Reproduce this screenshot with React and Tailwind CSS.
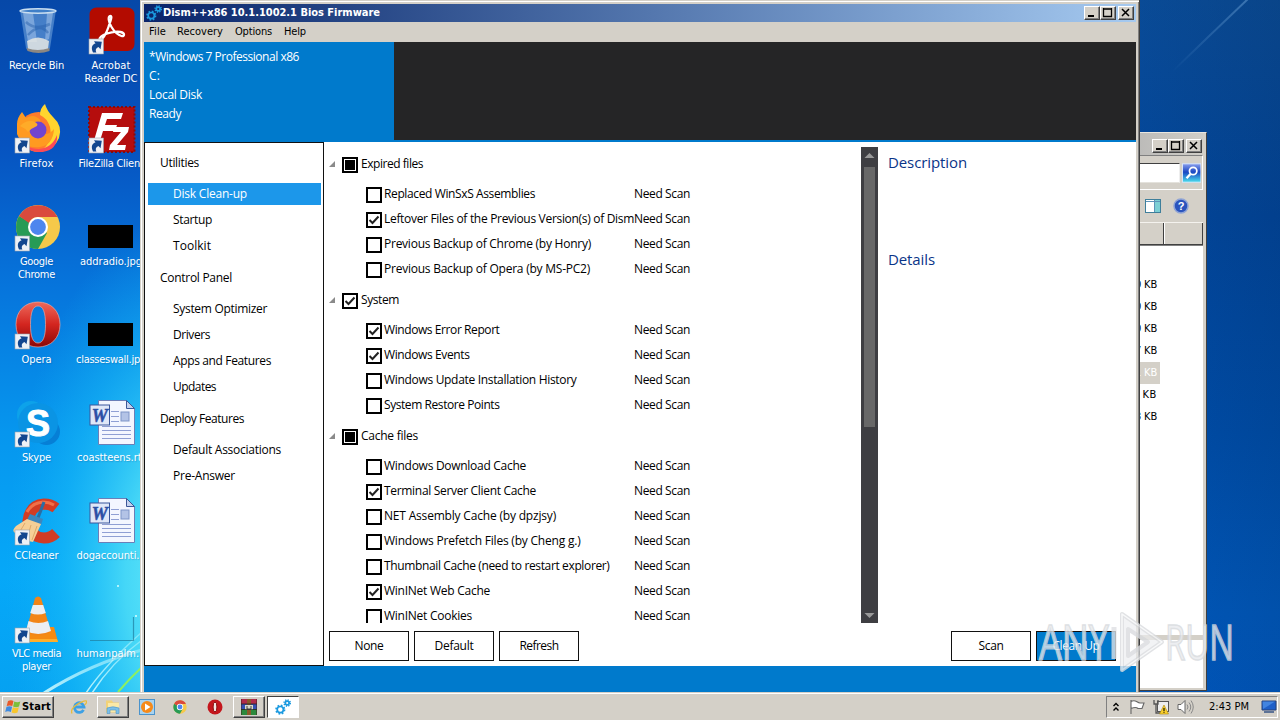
import React, { useLayoutEffect, useRef, useState } from 'react';

const UI = "font-['Open_Sans','Noto_Sans',sans-serif]";
const SYS = "font-['DejaVu_Sans_Condensed','DejaVu_Sans',sans-serif]";

/* Single-line text whose tracking is adjusted to fill a given width. */
function Fit({ w, children, className = '' }) {
  const ref = useRef(null);
  const [sp, setSp] = useState(0);
  useLayoutEffect(() => {
    if (!w) return;
    const natural = ref.current.getBoundingClientRect().width;
    setSp((w - natural) / String(children).length);
  }, []);
  return (
    <span ref={ref} className={'inline-block whitespace-pre ' + className} style={{ letterSpacing: sp ? sp + 'px' : undefined }}>
      {children}
    </span>
  );
}

function Gear({ cx, cy, r, c = '#1b9ae0' }) {
  const t = (2 * Math.PI * (r + 1)) / 16;
  return (
    <g fill="none" stroke={c}>
      <circle cx={cx} cy={cy} r={r} strokeWidth="1.7" />
      <circle cx={cx} cy={cy} r={r + 1} strokeWidth="2" strokeDasharray={`${t} ${t}`} />
    </g>
  );
}

function Gears({ className }) {
  return (
    <svg viewBox="0 0 16 16" className={className}>
      <Gear cx={5.3} cy={10.6} r={3.1} />
      <Gear cx={12.2} cy={4} r={1.9} />
    </svg>
  );
}

function Shortcut() {
  return (
    <g transform="translate(2 34)">
      <rect width="14.5" height="15" fill="#eef1f6" stroke="#9aa3b0" strokeWidth=".6" />
      <path d="M4 13.500C1.500 8.500 3.500 5.200 6.500 4.600L5 2.200l7.800.6-1.300 7.400-2-2.200C7.300 9 6 10.500 7.400 13.500z" fill="#12468f" />
    </g>
  );
}

const icons = {
  bin: (
    <g>
      <path d="M7 4 13 42q1 4 12 4t12-4L43 4z" fill="#83b4e4" fillOpacity=".5" />
      <path d="M10 7 15 36h9L20 7zM34 7l-2 28 4-2 4-26z" fill="#dcefff" opacity=".35" />
      <path d="M13 16q9 9 24 2M15 29q12-13 20-2" stroke="#245ea8" strokeWidth="2.500" fill="none" opacity=".45" />
      <path d="M14 35q11-7 22 0l-1 8q-10 3-20 0z" fill="#e6e7e4" opacity=".85" />
      <path d="M13.500 42q11 4 23 0v3q-11 4-22 0z" fill="#8d8781" />
      <ellipse cx="25" cy="5" rx="18" ry="2.200" fill="#3f7fc8" stroke="#c9def0" strokeWidth="1.400" />
    </g>
  ),
  acrobat: (
    <g>
      <rect x="2.500" y="1.500" width="45" height="43.500" rx="7" fill="#b30b00" />
      <path d="M23.500 10c-3 0-2 6 1 11s7 8 10 9 4-3-1-4-13 1-17 3-5 5-3 5 6-7 8-13 4-11 2-11z" fill="none" stroke="#fff" strokeWidth="2.300" />
      <g transform="translate(0 -1)"><Shortcut /></g>
    </g>
  ),
  firefox: (
    <g>
      <circle cx="25.500" cy="28" r="20" fill="#ff7b2c" />
      <path d="M27 11Q27 4 32 0q2 7 8 13 10 9 6 21-5 12-18 13 12-9 9-24-3-9-10-12z" fill="#ffd52e" />
      <path d="M4 20Q4 14 9 8l4 6q7-4 12 0 5 3 0 6-8 4 1 10 10 2 15-5-1 16-14 18Q10 45 4 30z" fill="#ff9a20" />
      <path d="M6 32q6 13 20 13 13-1 18-14 1 15-15 17Q12 49 6 32z" fill="#fb4a58" />
      <circle cx="25" cy="26" r="8.500" fill="#7244cf" />
      <path d="M7 22q7-7 15-4 5 3 0 5-5 2-7 5-3-4-8-6z" fill="#ffab28" />
      <Shortcut />
    </g>
  ),
  filezilla: (
    <g>
      <rect x="2" y="3" width="45.500" height="45" fill="#b50d0d" stroke="#8a0a0a" strokeWidth="2" strokeDasharray="2 2" />
      <path d="M15 9h21l-2 6H20l-2 6h12l-2 6H16l-4 13H6z" fill="#fff" />
      <path d="M27 23h15l-1 5-11 13h9l-1 5H22l1-5 11-13h-8z" fill="#fff" />
      <Shortcut />
    </g>
  ),
  chrome: (
    <g>
      <circle cx="25" cy="25" r="22" fill="#f6c94a" />
      <path d="M25 25 6 14a22 22 0 0 0 19 33l9-16z" fill="#279b56" />
      <path d="M6 14A22 22 0 0 1 44.500 15H25a10 10 0 0 0-9 6z" fill="#da4a3d" />
      <circle cx="25" cy="25" r="10" fill="#fff" />
      <circle cx="25" cy="25" r="7.900" fill="#4d86ee" />
      <Shortcut />
    </g>
  ),
  black: <rect x="1" y="23" width="45" height="23" fill="#000" />,
  opera: (
    <g>
      <defs>
        <linearGradient id="op" x1="0" y1="0" x2="0" y2="1">
          <stop offset="0" stopColor="#ee6a5c" />
          <stop offset=".5" stopColor="#d3251f" />
          <stop offset="1" stopColor="#8b0707" />
        </linearGradient>
      </defs>
      <path fillRule="evenodd" d="M25 2C38 2 47 11 47 24.500S38 47 25 47 3 38 3 24.500 12 2 25 2zm0 4c-5 0-7.500 6-7.500 18.500S20 43 25 43s7.500-6 7.500-18.500S30 6 25 6z" fill="url(#op)" stroke="#e9a8a2" strokeWidth=".7" />
      <Shortcut />
    </g>
  ),
  skype: (
    <g>
      <circle cx="18" cy="17" r="14" fill="#0da2ea" />
      <circle cx="33.500" cy="33.500" r="13.500" fill="#067fd6" />
      <circle cx="25" cy="25" r="20" fill="#0a94e4" />
      <text x="25" y="38" textAnchor="middle" fontFamily="Liberation Sans, sans-serif" fontWeight="bold" fontSize="36" fill="#fff" stroke="#fff">S</text>
      <Shortcut />
    </g>
  ),
  word: (
    <g>
      <path d="M11.500 2.500h28l8 8v36h-36z" fill="#f3f6ff" stroke="#6a7fb8" />
      <path d="M39.500 2.500v8h8z" fill="#c4d2ee" stroke="#3d5797" />
      <path d="M24 13.500h8M24 18.500h8M24 23.500h8M15 28.500h29M15 32.500h29M15 36.500h29M15 40.500h29" stroke="#8f9fd4" />
      <rect x="34" y="14" width="8" height="9" fill="#b3c3e6" stroke="#7f95c8" />
      <rect x="3" y="7" width="19.500" height="20" fill="#dfe7f8" stroke="#3a569c" />
      <text x="12.700" y="23.500" textAnchor="middle" fontFamily="Liberation Serif, serif" fontStyle="italic" fontWeight="bold" fontSize="18" fill="#2c4fa5" stroke="#2c4fa5" strokeWidth=".5">W</text>
    </g>
  ),
  ccleaner: (
    <g>
      <path d="M43 12Q38 8 31 8 17 9 15 25q1 16 16 17 7 0 12-5" fill="none" stroke="#d23c24" strokeWidth="11" />
      <path d="M41 9Q36 6 30 6 19 7 14 16" fill="none" stroke="#f07048" strokeWidth="3" />
      <path d="m31 6-6 16" stroke="#2b6da3" strokeWidth="3" />
      <path d="m17 18 13 5-2 6-14-5z" fill="#3d86bd" />
      <path d="M14 23 3 30q-4 4-2 6 7 8 19 10l8-18z" fill="#f6cf96" />
      <path d="m12 27-6 10m12-8-4 14m10-13-5 14" stroke="#dfa868" />
      <Shortcut />
    </g>
  ),
  vlc: (
    <g>
      <path d="m14 33-4 15h35l-4-15z" fill="#f58a12" />
      <path d="M11 45h33l1 3H10z" fill="#ffae2c" />
      <path d="M22 4q3-3 6 0l10 34q-13 7-25 0z" fill="#f28518" />
      <path d="M19.800 11h10.400l2.600 8q-8 3-15.600 0zM15.500 27q10 4 19.500 0l3 10q-13 6-25 0z" fill="#eceef2" />
      <Shortcut />
    </g>
  ),
  palm: <path d="M3 46.500h43.500V23" fill="none" stroke="#1f7d9e" strokeWidth="1.200" opacity=".7" />,
};

const columns = [
  [
    ['bin', [['Recycle Bin', 55]]],
    ['firefox', [['Firefox', 34]]],
    ['chrome', [['Google', 33], ['Chrome', 37]]],
    ['opera', [['Opera', 30]]],
    ['skype', [['Skype', 29]]],
    ['ccleaner', [['CCleaner', 44]]],
    ['vlc', [['VLC media', 49], ['player', 29]]],
  ],
  [
    ['acrobat', [['Acrobat', 39], ['Reader DC', 53]]],
    ['filezilla', [['FileZilla Client', 65]]],
    ['black', [['addradio.jpg', 62]]],
    ['black', [['classeswall.jpg', 70]]],
    ['word', [['coastteens.rtf', 68]]],
    ['word', [['dogaccounti...', 69]]],
    ['palm', [['humanpalm...', 69]]],
  ],
];

function Desktop() {
  return (
    <div className={'absolute left-0 top-0 flex pt-[6px] text-[11px] leading-[13px] text-white ' + SYS}>
      {columns.map((col, i) => (
        <div key={i} className="w-[74.500px]">
          {col.map(([ic, lines], j) => (
            <div key={j} className="flex h-[98px] w-[73px] flex-col items-center">
              <svg viewBox="0 0 48 48" className="mb-[5px] h-12 w-12 shrink-0 overflow-visible">{icons[ic]}</svg>
              {lines.map(([t, w]) => <Fit key={t} w={w} className="shrink-0 [text-shadow:1px_1px_1px_#0a3f7c40]">{t}</Fit>)}
            </div>
          ))}
        </div>
      ))}
    </div>
  );
}

function Wallpaper() {
  return (
    <svg viewBox="0 0 1280 720" className="absolute inset-0 h-full w-full">
      <defs>
        <linearGradient id="l1" x1="0" y1="0" x2="0" y2="1">
          <stop offset="0" stopColor="#0648a8" />
          <stop offset=".2" stopColor="#0653c0" />
          <stop offset=".4" stopColor="#0675dc" />
          <stop offset=".6" stopColor="#0696ee" />
          <stop offset=".8" stopColor="#06a8f8" />
          <stop offset="1" stopColor="#05a0f0" />
        </linearGradient>
        <radialGradient id="l2" gradientUnits="userSpaceOnUse" cx="0" cy="0" r="1" gradientTransform="translate(190 580) scale(185 370)">
          <stop offset="0" stopColor="#6ff0fb" />
          <stop offset=".35" stopColor="#4cdcf7" stopOpacity=".9" />
          <stop offset=".7" stopColor="#1cc0f8" stopOpacity=".45" />
          <stop offset="1" stopColor="#10b0f4" stopOpacity="0" />
        </radialGradient>
        <linearGradient id="r1" x1="0" y1="0" x2="0" y2="1">
          <stop offset="0" stopColor="#0b478c" />
          <stop offset=".3" stopColor="#024191" />
          <stop offset=".6" stopColor="#0049a0" />
          <stop offset=".85" stopColor="#0155b4" />
          <stop offset="1" stopColor="#0054b8" />
        </linearGradient>
        <linearGradient id="r2" x1="0" y1="0" x2="1" y2="0">
          <stop offset="0" stopColor="#0060d0" stopOpacity=".15" />
          <stop offset="1" stopColor="#003878" stopOpacity=".15" />
        </linearGradient>
        <linearGradient id="sw" x1="0" y1="1" x2="1" y2="0">
          <stop offset="0" stopColor="#d8ffff" stopOpacity=".85" />
          <stop offset="1" stopColor="#d8ffff" stopOpacity=".35" />
        </linearGradient>
        <linearGradient id="ray" x1="0" y1="1" x2="1" y2="0">
          <stop offset="0" stopColor="#6fa5d8" stopOpacity="0" />
          <stop offset="1" stopColor="#6fa5d8" stopOpacity=".5" />
        </linearGradient>
      </defs>
      <rect width="640" height="720" fill="url(#l1)" />
      <rect width="640" height="720" fill="url(#l2)" />
      <rect x="640" width="640" height="720" fill="url(#r1)" />
      <rect x="1140" width="140" height="720" fill="url(#r2)" />
      <path d="M1172 72Q1210 35 1250-3" stroke="url(#ray)" strokeWidth="2" fill="none" />
      <g fill="none">
        <path d="M44 693Q90 664 142 650" stroke="url(#sw)" strokeWidth="3" />
        <path d="M86 693Q105 665 142 632M92 693Q112 662 142 640" stroke="url(#sw)" strokeWidth="1.400" />
        <path d="M118 692Q130 678 142 667" stroke="#8df060" strokeWidth="2" />
      </g>
      <circle cx="118" cy="586" r="1" fill="#d8ffff" />
      <circle cx="136" cy="616" r="1" fill="#d8ffff" />
    </svg>
  );
}

const raised = 'border border-t-white border-l-white border-r-[#404040] border-b-[#404040] bg-[#d4d0c8] shadow-[inset_-1px_-1px_0_#808080]';

function CaptionButtons() {
  return (
    <div className="flex">
      <div className={'h-[14px] w-4 ' + raised}><svg viewBox="0 0 14 12" className="h-3 w-3.5"><path d="M3 9h6" stroke="#000" strokeWidth="2" /></svg></div>
      <div className={'h-[14px] w-4 ' + raised}><svg viewBox="0 0 14 12" className="h-3 w-3.5"><path d="M2 2h9M2.500 1v8.500h8V1" fill="none" stroke="#000" strokeWidth="1.300" /></svg></div>
      <div className={'ml-[2px] h-[14px] w-4 ' + raised}><svg viewBox="0 0 14 12" className="h-3 w-3.5"><path d="m3 2 7 7M10 2 3 9" stroke="#000" strokeWidth="1.500" /></svg></div>
    </div>
  );
}

const sidebar = [
  ['Utilities', 39, [['Disk Clean-up', 74, true], ['Startup', 39], ['Toolkit', 38]]],
  ['Control Panel', 72, [['System Optimizer', 94], ['Drivers', 37], ['Apps and Features', 98], ['Updates', 43]]],
  ['Deploy Features', 84, [['Default Associations', 108], ['Pre-Answer', 62]]],
];

function Sidebar() {
  return (
    <div className="w-[180px] shrink-0 border border-[#111] bg-white pt-px">
      {sidebar.map(([h, w, items]) => (
        <div key={h}>
          <div className="flex h-[37px] items-center pl-[15px]"><Fit w={w}>{h}</Fit></div>
          {items.map(([t, tw, on]) => (
            <div key={t} className="flex h-[26px] items-center pl-[3px]">
              <div className={'flex h-[22px] w-[173px] shrink-0 items-center pl-[25px] ' + (on ? 'bg-[#1c97ea] text-white' : '')}><Fit w={tw}>{t}</Fit></div>
            </div>
          ))}
        </div>
      ))}
    </div>
  );
}

const tree = [
  ['Expired files', 62, 'mixed', [
    ['Replaced WinSxS Assemblies', 151, 0],
    ['Leftover Files of the Previous Version(s) of Dism', 250, 1],
    ['Previous Backup of Chrome (by Honry)', 207, 0],
    ['Previous Backup of Opera (by MS-PC2)', 206, 0],
  ]],
  ['System', 38, 'on', [
    ['Windows Error Report', 115.5, 1],
    ['Windows Events', 85.5, 1],
    ['Windows Update Installation History', 192.5, 0],
    ['System Restore Points', 115.5, 0],
  ]],
  ['Cache files', 57, 'mixed', [
    ['Windows Download Cache', 142, 0],
    ['Terminal Server Client Cache', 152, 1],
    ['NET Assembly Cache (by dpzjsy)', 172, 0],
    ['Windows Prefetch Files (by Cheng g.)', 196.5, 0],
    ['Thumbnail Cache (need to restart explorer)', 225.5, 0],
    ['WinINet Web Cache', 106, 1],
    ['WinINet Cookies', 88, 0],
  ]],
];

function Check({ state }) {
  return (
    <svg viewBox="0 0 16 16" className="h-4 w-4 shrink-0">
      <rect x="1" y="1" width="14" height="14" fill="#fff" stroke="#000" strokeWidth="2" />
      {state === 'mixed' && <rect x="3" y="3" width="10" height="10" fill="#000" />}
      {state === 'on' && <path d="m3.500 8 3 3 6-6.500" fill="none" stroke="#222" strokeWidth="2" />}
    </svg>
  );
}

function Tree() {
  return (
    <div className="h-[477px] w-[532px] overflow-hidden">
      {tree.map(([h, w, st, items]) => (
        <div key={h}>
          <div className="flex h-9">
            <svg viewBox="0 0 6 6" className="mt-[15px] h-1.5 w-1.5"><path d="M6 0v6H0z" fill="#8a8a8a" /></svg>
            <div className="ml-[7px] mt-[11px]"><Check state={st} /></div>
            <div className="ml-[3px] mt-[9px] leading-[18px]"><Fit w={w}>{h}</Fit></div>
          </div>
          {items.map(([t, tw, on]) => (
            <div key={t} className="flex h-[25px] pl-[37px]">
              <div className="mt-[5px]"><Check state={on ? 'on' : ''} /></div>
              <div className="ml-[2px] mt-[3px] w-[250px] leading-[18px]"><Fit w={tw}>{t}</Fit></div>
              <div className="mt-[3px] leading-[18px]"><Fit w={56}>Need Scan</Fit></div>
            </div>
          ))}
        </div>
      ))}
    </div>
  );
}

function Btn({ t, w, blue }) {
  return (
    <div className={'flex h-[30px] w-20 items-center justify-center border border-[#111] ' + (blue ? 'bg-[#007acc] text-white' : 'bg-white')}><Fit w={w}>{t}</Fit></div>
  );
}

function MainWindow() {
  return (
    <div className="absolute left-[140px] top-0 flex h-[692px] w-[1000px] flex-col border-r border-r-[#404040] bg-[#d4d0c8] pl-1 pr-[3px] pt-1 shadow-[inset_1px_1px_0_#d4d0c8,inset_2px_2px_0_#fff,inset_-1px_0_0_#808080]">
      <div className="flex h-[18px] shrink-0 items-center bg-gradient-to-r from-[#0a246a] to-[#a6caf0] pr-[2px]">
        <Gears className="ml-[2px] mr-px h-4 w-4" />
        <div className={'flex-1 text-[11px] font-bold leading-[18px] text-white ' + SYS}><Fit w={217}>Dism++x86 10.1.1002.1 Bios Firmware</Fit></div>
        <CaptionButtons />
      </div>
      <div className={'flex h-5 shrink-0 items-center pl-[5px] pt-px text-[11px] text-black ' + SYS}>
        <div className="w-7"><Fit w={17}>File</Fit></div>
        <div className="w-[58px]"><Fit w={46}>Recovery</Fit></div>
        <div className="w-[49px]"><Fit w={37}>Options</Fit></div>
        <Fit w={22}>Help</Fit>
      </div>
      <div className="flex h-[100px] shrink-0 border-b-2 border-[#007acc] bg-[#252526] text-xs leading-[19px] text-white">
        <div className="flex h-[100px] w-[250px] flex-col bg-[#007acc] pl-[5px] pt-[5px]">
          <div><Fit w={150}>*Windows 7 Professional x86</Fit></div>
          <div><Fit w={11}>C:</Fit></div>
          <div><Fit w={53}>Local Disk</Fit></div>
          <div><Fit w={32}>Ready</Fit></div>
        </div>
      </div>
      <div className="flex h-[524px] shrink-0 bg-white text-xs text-black">
        <Sidebar />
        <div className="flex flex-1 flex-col pl-[5px] pt-1">
          <div className="flex">
            <Tree />
            <div className="mt-px flex h-[476px] w-[17px] flex-col items-center bg-[#3e3e42]">
              <svg viewBox="0 0 17 20" className="h-5 w-[17px] shrink-0"><path d="m3.500 11 5-5 5 5z" fill="#999" /></svg>
              <div className="h-[260px] w-[11px] shrink-0 bg-[#686868]" />
              <div className="flex-1" />
              <svg viewBox="0 0 17 16" className="h-4 w-[17px] shrink-0"><path d="m3.500 6 5 5 5-5z" fill="#999" /></svg>
            </div>
            <div className="ml-[10px] text-[15px] leading-6 text-[#0a3488]">
              <div className="mt-[4px]"><Fit w={79}>Description</Fit></div>
              <div className="mt-[73px]"><Fit w={47}>Details</Fit></div>
            </div>
          </div>
          <div className="mt-2 flex gap-[5px] pr-5">
            <Btn t="None" w={29} />
            <Btn t="Default" w={39} />
            <Btn t="Refresh" w={39} />
            <div className="flex-1" />
            <Btn t="Scan" w={25} />
            <Btn t="Clean Up" w={47} blue />
          </div>
        </div>
      </div>
      <div className="flex-1 bg-[#007acc]" />
    </div>
  );
}

function BackWindow() {
  const rows = ['0 KB', '0 KB', '0 KB', '7 KB', '1 KB', '  KB', '3 KB'];
  return (
    <div className="absolute left-[1100px] top-[132px] flex h-[559px] w-[107px] flex-col border border-b-[#404040] border-l-[#d4d0c8] border-r-[#404040] border-t-[#e8e6e0] bg-[#d4d0c8] pb-[2px] pr-[3px]">
      <div className="flex h-[22px] shrink-0 items-center justify-end bg-gradient-to-r from-[#b0b0b0] to-[#d0cec8] pr-[1px] pt-[3px]"><CaptionButtons /></div>
      <div className="flex h-[35px] shrink-0 items-center justify-end border border-b-white border-r-white border-t-[#808080] pr-[1px]">
        <div className="mr-[2px] h-5 w-20 border border-r-[#eee] border-t-[#404040] border-b-[#e4e2dc] bg-white" />
        <svg viewBox="0 0 20 20" className="h-5 w-5">
          <defs><linearGradient id="sg" x1="0" y1="0" x2="0" y2="1"><stop offset="0" stopColor="#8aa0ee" /><stop offset=".45" stopColor="#1a46c2" /><stop offset="1" stopColor="#4be0ee" /></linearGradient></defs>
          <rect x=".5" y=".5" width="19" height="19" fill="url(#sg)" stroke="#d9e6fa" />
          <circle cx="11.500" cy="8" r="3.800" fill="none" stroke="#fff" strokeWidth="1.800" />
          <path d="m8.700 11-4 4.500" stroke="#fff" strokeWidth="2.400" />
        </svg>
      </div>
      <div className="flex h-8 shrink-0 items-center justify-end">
        <svg viewBox="0 0 16 14" className="mr-3 h-3.5 w-4"><rect x=".5" y=".5" width="15" height="13" fill="#fff" stroke="#3f7f9b" /><path d="M10 1h5v12h-5z" fill="#7ccfd4" /><path d="M1 2.500h14M9.500 1v12" stroke="#5d93b8" /></svg>
        <svg viewBox="0 0 16 16" className="mr-[14px] h-4 w-4"><circle cx="8" cy="8" r="7" fill="#2b54bd" stroke="#8fa4d6" strokeWidth="1.500" /><text x="8" y="12" textAnchor="middle" fontFamily="Liberation Sans, sans-serif" fontWeight="bold" fontSize="11" fill="#fff">?</text></svg>
      </div>
      <div className="flex h-[23px] shrink-0 border-b border-t border-b-[#404040] border-t-[#f4f2ee]">
        <div className="w-[63px] border-r border-r-[#404040]" />
        <div className="flex-1 border-l border-r border-l-white border-r-[#404040]" />
      </div>
      <div className="flex-1 bg-white pt-[29px] shadow-[inset_0_1px_0_#808080]">
        {rows.map((r, i) => (
          <div key={i} className={'flex h-[22px] w-[59px] items-center justify-end pr-[3px] text-[11px] ' + SYS + (i === 4 ? ' bg-[#d4d0c8] text-white' : ' text-black')}><Fit w={22}>{r}</Fit></div>
        ))}
        <div className="mt-[207px] h-[5px] bg-[#d4d0c8]" />
      </div>
    </div>
  );
}

function TaskSlot({ className = '', children }) {
  return <div className={'flex h-[22px] shrink-0 items-center justify-center ' + className}>{children}</div>;
}

function Taskbar() {
  return (
    <div className={'absolute left-0 top-[692px] flex h-7 w-full bg-[#d4d0c8] pl-[2px] pr-[2px] pt-1 text-[11px] text-black shadow-[inset_0_1px_0_#d4d0c8,inset_0_2px_0_#fff] ' + SYS}>
      <TaskSlot className={'w-[52px] ' + raised}>
        <svg viewBox="0 0 16 16" className="mr-px h-4 w-4">
          <path d="M3 2q3-1.500 5.500 0L7.300 7Q5 5.800 1.700 7z" fill="#e85a2a" />
          <path d="M9.300 2.500q3 1.500 6 0L14 7.500q-3 1.300-5.900 0z" fill="#7cbf3a" />
          <path d="M1.500 7.800q3-1.300 5.600 0L5.900 13q-3-1.500-5.700 0z" fill="#3f8be0" />
          <path d="M7.900 8.300q3 1.500 5.900 0l-1.300 5.200q-3 1.300-5.900 0z" fill="#f8c62c" />
        </svg>
        <Fit w={29} className="font-bold">Start</Fit>
      </TaskSlot>
      <TaskSlot className="ml-[17px] w-4">
        <svg viewBox="0 0 16 16" className="h-4 w-4"><path d="M12.500 10.800A4.800 4.800 0 1 1 13 8H4" fill="none" stroke="#3da0e4" strokeWidth="2.800" /><path d="M1 14.500Q-1 10 6 5.500T15.500 2Q16 4 13.500 6" fill="none" stroke="#e8bc3c" strokeWidth="1.300" /></svg>
      </TaskSlot>
      <TaskSlot className={'ml-[10px] w-8 ' + raised}>
        <svg viewBox="0 0 16 16" className="h-4 w-4"><path d="M1 1.500h6l1 2h6v10H1z" fill="#f2d277" /><path d="M3 4h11v9H3z" fill="#fbe9a6" /><path d="M2 14.500V9q6-2.500 12 0v5.500h-3V11H5v3.500z" fill="#7cbfe8" stroke="#4f94c4" strokeWidth=".6" /></svg>
      </TaskSlot>
      <TaskSlot className="ml-[10px] w-4">
        <svg viewBox="0 0 16 16" className="h-4 w-4"><rect x=".5" y=".5" width="15" height="15" fill="#a9d3ef" stroke="#4a93cc" /><circle cx="8" cy="8" r="6" fill="#f68a1a" /><path d="m6 4.500 5.500 3.500L6 11.500z" fill="#fff" /></svg>
      </TaskSlot>
      <TaskSlot className="ml-[18px] w-[14px]"><svg viewBox="2 2 46 46" className="h-3.5 w-3.5"><circle cx="25" cy="25" r="22" fill="#f6c94a" /><path d="M25 25 6 14a22 22 0 0 0 19 33l9-16z" fill="#279b56" /><path d="M6 14A22 22 0 0 1 44.500 15H25a10 10 0 0 0-9 6z" fill="#da4a3d" /><circle cx="25" cy="25" r="10.500" fill="#fff" /><circle cx="25" cy="25" r="8" fill="#4d86ee" /></svg></TaskSlot>
      <TaskSlot className="ml-5 w-4">
        <svg viewBox="0 0 16 16" className="h-4 w-4"><circle cx="8" cy="8" r="7.500" fill="#c4161c" /><ellipse cx="8" cy="8" rx="1.900" ry="5" fill="#f4e4e0" stroke="#8a0d0f" /></svg>
      </TaskSlot>
      <TaskSlot className={'ml-[10px] w-8 ' + raised}>
        <svg viewBox="0 0 16 16" className="h-4 w-4"><path d="M0 0h16v5H0z" fill="#b02a4a" /><path d="M0 5h16v5H0z" fill="#3450b4" /><path d="M0 10h16v6H0z" fill="#2c8a3c" /><path d="M6 0h4v16H6z" fill="#8a5a2a" /><path d="M4 6h8v5H4z" fill="#d8d8c8" /><path d="M6 7v3h4V7M0 5h16M0 10.500h16" fill="none" stroke="#222" strokeWidth=".8" /><path d="M0 0v16M16 0v16" stroke="#402020" /></svg>
      </TaskSlot>
      <TaskSlot className="ml-[2px] w-8 border border-b-white border-l-[#404040] border-r-white border-t-[#404040] bg-white"><Gears className="h-4 w-4" /></TaskSlot>
      <div className="flex-1" />
      <div className="flex h-[22px] w-[172px] items-center border border-b-white border-l-[#808080] border-r-white border-t-[#808080] pl-[6px]">
        <svg viewBox="0 0 6 10" className="h-2.5 w-1.5"><path d="m.5 4 2.500-2.500L5.500 4M.5 8.500 3 6l2.500 2.500" fill="none" stroke="#000" strokeWidth="1.400" /></svg>
        <svg viewBox="0 0 16 16" className="ml-[10px] h-4 w-4"><path d="M2 1v14M2 2.500q3-1.500 5.500 0T11 4h4l-2 5.500H9Q7 7.500 2 9.500z" fill="#fff" stroke="#666" strokeWidth="1.100" /></svg>
        <svg viewBox="0 0 16 16" className="ml-2 h-4 w-4"><rect x="4.500" y="2.500" width="11" height="10" fill="#eee" stroke="#555" /><path d="M1 1v4h4V1M3 5v9h5" fill="none" stroke="#555" strokeWidth="1.300" /><path d="m11 6 4.500 9h-9z" fill="#fbd02c" stroke="#a98408" strokeWidth=".6" /><path d="M11 9v3m0 .800v1" stroke="#000" strokeWidth="1.100" /></svg>
        <svg viewBox="0 0 17 16" className="ml-2 h-4 w-[17px]"><path d="M1 5.500h3L8 1.500v13l-4-4H1z" fill="#fff" stroke="#666" /><path d="M10 5.500q2 2.500 0 5M12 3.500q3.500 4.500 0 9M14 1.500q4.500 6.500 0 13" fill="none" stroke="#888" /></svg>
        <Fit w={40} className="ml-[15px]">2:43 PM</Fit>
        <svg viewBox="0 0 16 14" className="ml-[12px] h-3.5 w-4"><path d="M1 1h14v9H1z" fill="#1f5fc8" stroke="#27437c" /><path d="M1.500 1.500H14L2 9z" fill="#5a9cf0" opacity=".6" /><path d="M3 12h10" stroke="#5d7396" strokeWidth="2" /></svg>
      </div>
    </div>
  );
}

function Watermark() {
  return (
    <svg viewBox="0 0 200 70" className="absolute left-[1036px] top-[605px] h-[70px] w-[200px] overflow-visible" opacity=".8">
      <g fontFamily="Open Sans, sans-serif" fontSize="49" fill="#e9ebee" stroke="#d6d9dd" strokeWidth="1.600">
        <text x="3" y="54.500" textLength="70" lengthAdjust="spacingAndGlyphs">ANY</text>
        <text x="129" y="54.500" textLength="69" lengthAdjust="spacingAndGlyphs">RUN</text>
      </g>
      <path d="M78 22v32" stroke="#dfe1e4" strokeWidth="5" />
      <path d="M86 9v56l40-28z M92 24v27l20-14z" fillRule="evenodd" fill="#eceef0" fillOpacity=".8" stroke="#dadcdf" strokeWidth="4" strokeLinejoin="round" />
      <path d="M86 9v56l40-28z" fill="none" stroke="#f7f8f9" strokeWidth="1.500" strokeLinejoin="round" />
    </svg>
  );
}

export default function App() {
  return (
    <div className={'relative h-[720px] w-[1280px] overflow-hidden bg-[#0653bd] ' + UI}>
      <Wallpaper />
      <Desktop />
      <BackWindow />
      <MainWindow />
      <Watermark />
      <Taskbar />
    </div>
  );
}
